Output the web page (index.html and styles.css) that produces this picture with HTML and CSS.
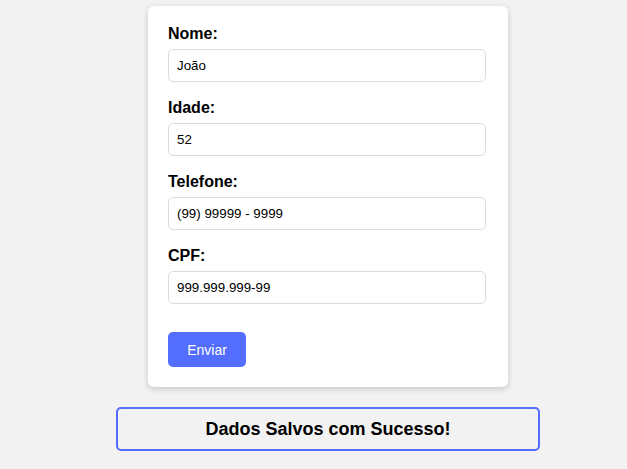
FILE: index.html
```html
<!DOCTYPE html>
<html lang="pt">
<head>
<meta charset="utf-8">
<title>Cadastro</title>
<link rel="stylesheet" href="styles.css">
</head>
<body>
<main class="page">
  <form class="card">
    <div class="field">
      <label class="label" for="nome">Nome:</label>
      <input class="input" id="nome" type="text" value="João">
    </div>
    <div class="field">
      <label class="label" for="idade">Idade:</label>
      <input class="input" id="idade" type="text" value="52">
    </div>
    <div class="field">
      <label class="label" for="tel">Telefone:</label>
      <input class="input" id="tel" type="text" value="(99) 99999 - 9999">
    </div>
    <div class="field">
      <label class="label" for="cpf">CPF:</label>
      <input class="input" id="cpf" type="text" value="999.999.999-99">
    </div>
    <button class="button" type="button">Enviar</button>
  </form>
  <div class="message">Dados Salvos com Sucesso!</div>
</main>
</body>
</html>
```
FILE: styles.css
```css
* { box-sizing: border-box; }
html, body { margin: 0; padding: 0; }
body {
  background: #f2f2f2;
  font-family: "Liberation Sans", Arial, sans-serif;
  color: #000;
}
.page {
  display: flex;
  flex-direction: column;
  align-items: center;
  padding: 6px 0 0 29px;
}
.card {
  width: 360px;
  background: #fff;
  border-radius: 6px;
  padding: 18px 20px 20px;
  box-shadow: 0 2px 6px rgba(0,0,0,0.18);
}
.field { margin-bottom: 16px; }
.label {
  display: block;
  font-size: 16px;
  font-weight: bold;
  line-height: 19px;
  margin-bottom: 6px;
}
.input {
  display: block;
  width: 318px;
  height: 33px;
  padding: 0 8px;
  font-family: "Liberation Sans", Arial, sans-serif;
  font-size: 13.33px;
  color: #000;
  border: 1px solid #dcdcdc;
  border-radius: 5px;
  background: #fff;
}
.button {
  display: block;
  margin-top: 28px;
  width: 78px;
  height: 35px;
  border: none;
  border-radius: 5px;
  background: #536dfe;
  color: #fff;
  font-family: "Liberation Sans", Arial, sans-serif;
  font-size: 14px;
}
.message {
  margin-top: 20px;
  width: 424px;
  height: 44px;
  border: 2px solid #536dfe;
  border-radius: 5px;
  display: flex;
  align-items: center;
  justify-content: center;
  font-size: 18px;
  font-weight: bold;
}
```
